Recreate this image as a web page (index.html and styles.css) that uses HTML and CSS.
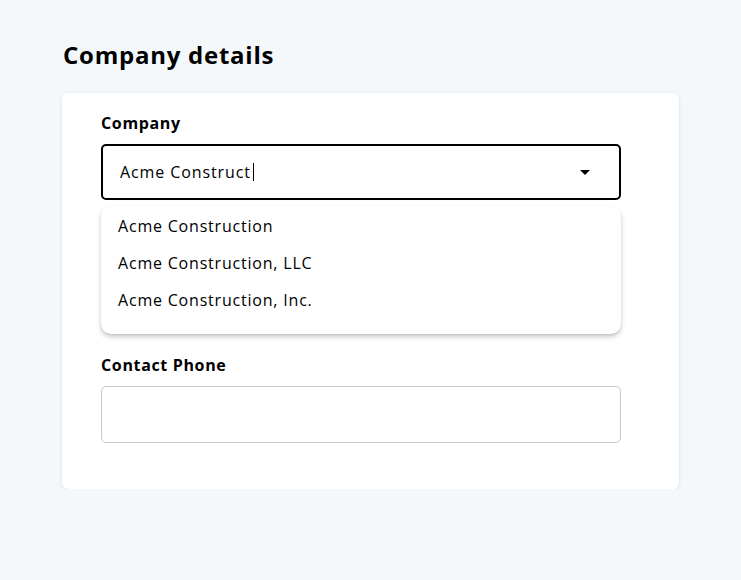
FILE: index.html
```html
<!DOCTYPE html>
<html lang="en">
<head>
<meta charset="utf-8">
<title>Company details</title>
<link rel="stylesheet" href="styles.css">
</head>
<body>
<main class="page">
  <h1 class="title">Company details</h1>
  <section class="card">
    <div class="field">
      <label class="label">Company</label>
      <div class="combo">
        <div class="select">
          <span class="value">Acme Construct<span class="caret"></span></span>
          <svg class="arrow" width="24" height="24" viewBox="0 0 24 24"><path d="M7 10l5 5 5-5z" fill="#000"/></svg>
        </div>
        <ul class="menu">
          <li>Acme Construction</li>
          <li>Acme Construction, LLC</li>
          <li>Acme Construction, Inc.</li>
        </ul>
      </div>
    </div>
    <div class="field phone">
      <label class="label">Contact Phone</label>
      <div class="input"></div>
    </div>
  </section>
</main>
</body>
</html>
```

FILE: styles.css
```css
html, body {
  margin: 0;
  padding: 0;
  background: #f5f8fb;
  font-family: "Open Sans", "DejaVu Sans", sans-serif;
  color: #000;
}
.page {
  padding: 40px 62px 0 62px;
  width: 617px;
}
.title {
  margin: 0 0 23px 1px;
  font-size: 24px;
  line-height: 30px;
  font-weight: 700;
  letter-spacing: 0.75px;
}
.card {
  background: #fff;
  border-radius: 6px;
  box-shadow: 0 1px 4px rgba(0, 0, 0, 0.1);
  padding: 20px 58px 46px 39px;
  height: 330px;
}
.field {
  display: flex;
  flex-direction: column;
}
.label {
  font-size: 16px;
  line-height: 20px;
  font-weight: 700;
  margin-bottom: 11px;
  letter-spacing: 0.65px;
}
.combo {
  position: relative;
}
.select {
  height: 56px;
  box-sizing: border-box;
  border: 2px solid #000;
  border-radius: 5px;
  display: flex;
  align-items: center;
  padding: 0 22px 0 17px;
  justify-content: space-between;
  font-size: 16px;
  letter-spacing: 0.9px;
}
.value {
  display: flex;
  align-items: center;
}
.caret {
  display: inline-block;
  width: 1.5px;
  height: 18px;
  background: #000;
  margin-left: 2px;
}
.arrow {
  display: block;
}
.menu {
  position: absolute;
  left: 0;
  right: 0;
  top: 62px;
  margin: 0;
  padding: 2px 0 15px 0;
  list-style: none;
  background: #fff;
  border-radius: 10px;
  box-shadow: 0 3px 5px rgba(0, 0, 0, 0.2), 0 1px 2px rgba(0, 0, 0, 0.08);
}
.menu li {
  padding: 0 17px;
  height: 37px;
  line-height: 37px;
  font-size: 16px;
  letter-spacing: 0.8px;
}
.phone {
  margin-top: 155px;
}
.input {
  height: 57px;
  box-sizing: border-box;
  border: 1px solid #c8c8c8;
  border-radius: 5px;
}
```
